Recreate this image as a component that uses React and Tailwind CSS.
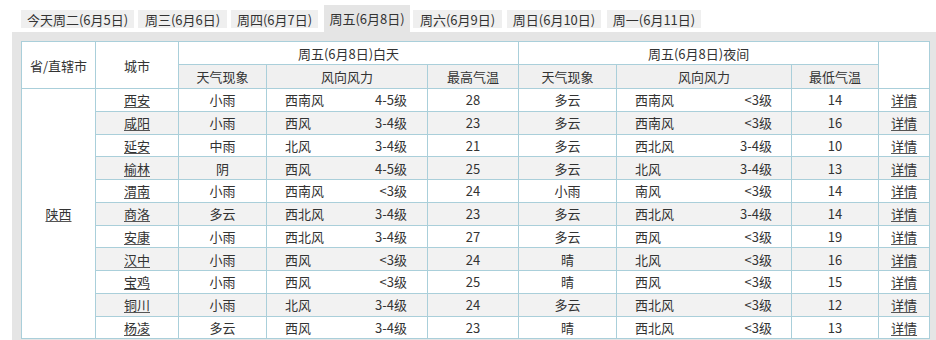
import React from "react";

// label, width and left margin of each day tab
const tabs = [
  ["今天周二(6月5日)", "w-[113px] ml-[21px]"],
  ["周三(6月6日)", "w-[89px] ml-[4px]"],
  ["周四(6月7日)", "w-[87px] ml-[4px]"],
  ["周五(6月8日)", "w-[86px] ml-[6px]"],
  ["周六(6月9日)", "w-[89px] ml-[3px]"],
  ["周日(6月10日)", "w-[94px] ml-[5px]"],
  ["周一(6月11日)", "w-[94px] ml-[6px]"],
];

const rows = [
  ["西安", "小雨", "西南风", "4-5级", "28", "多云", "西南风", "<3级", "14"],
  ["咸阳", "小雨", "西风", "3-4级", "23", "多云", "西南风", "<3级", "16"],
  ["延安", "中雨", "北风", "3-4级", "21", "多云", "西北风", "3-4级", "10"],
  ["榆林", "阴", "西风", "4-5级", "25", "多云", "北风", "3-4级", "13"],
  ["渭南", "小雨", "西南风", "<3级", "24", "小雨", "南风", "<3级", "14"],
  ["商洛", "多云", "西北风", "3-4级", "23", "多云", "西北风", "3-4级", "14"],
  ["安康", "小雨", "西北风", "3-4级", "27", "多云", "西风", "<3级", "19"],
  ["汉中", "小雨", "西风", "<3级", "24", "晴", "北风", "<3级", "16"],
  ["宝鸡", "小雨", "西风", "<3级", "25", "晴", "西风", "<3级", "15"],
  ["铜川", "小雨", "北风", "3-4级", "24", "多云", "西北风", "<3级", "12"],
  ["杨凌", "多云", "西风", "3-4级", "23", "晴", "西北风", "<3级", "13"],
];

const font = { fontFamily: '"Noto Sans CJK SC", "Liberation Sans", sans-serif' };

function Wind({ dir, level, padR }) {
  return (
    <div className={`flex justify-between pl-[18px] ${padR}`}>
      <span>{dir}</span>
      <span>{level}</span>
    </div>
  );
}

export default function App() {
  const cell = "border border-[#aacfda] text-center p-0";
  const link = "underline underline-offset-[2px] decoration-[#555]";
  return (
    <div className="w-[936px] h-[340px] overflow-hidden bg-white text-[13px] text-[#333]" style={font}>
      {/* day tabs */}
      <div className="flex items-end h-[32px]">
        {tabs.map(([t, size], i) =>
          i === 3 ? (
            <div key={t} className={`${size} h-[27px] flex items-center justify-center bg-[#e5e5e5] leading-none`}>
              {t}
            </div>
          ) : (
            <div key={t} className={`${size} h-[18px] mb-[4px] flex items-center justify-center bg-[#efefef] leading-none`}>
              {t}
            </div>
          )
        )}
      </div>

      <div className="ml-[12px] bg-[#e5e5e5] pt-[9px] pl-[9px] pr-[8px] pb-[4px]">
        <table className="table-fixed border-collapse bg-white w-[908px] leading-none">
          <colgroup>
            <col className="w-[74px]" />
            <col className="w-[83px]" />
            <col className="w-[88px]" />
            <col className="w-[161px]" />
            <col className="w-[91px]" />
            <col className="w-[98px]" />
            <col className="w-[175px]" />
            <col className="w-[87px]" />
            <col className="w-[51px]" />
          </colgroup>
          <thead>
            <tr className="h-[23px]">
              <th rowSpan={2} className={`${cell} font-normal`}>省/直辖市</th>
              <th rowSpan={2} className={`${cell} font-normal`}>城市</th>
              <th colSpan={3} className={`${cell} font-normal`}>周五(6月8日)白天</th>
              <th colSpan={3} className={`${cell} font-normal`}>周五(6月8日)夜间</th>
              <th rowSpan={2} className={`${cell} font-normal`}></th>
            </tr>
            <tr className="h-[24px] bg-[#f0f0f0]">
              <th className={`${cell} font-normal`}>天气现象</th>
              <th className={`${cell} font-normal`}>风向风力</th>
              <th className={`${cell} font-normal`}>最高气温</th>
              <th className={`${cell} font-normal`}>天气现象</th>
              <th className={`${cell} font-normal`}>风向风力</th>
              <th className={`${cell} font-normal`}>最低气温</th>
            </tr>
          </thead>
          <tbody>
            {rows.map((r, i) => (
              <tr key={r[0]} className={`h-[22.75px] ${i % 2 === 1 ? "bg-[#f2f2f2]" : "bg-white"}`}>
                {i === 0 && (
                  <td rowSpan={rows.length} className={`${cell} bg-white`}>
                    <span className={link}>陕西</span>
                  </td>
                )}
                <td className={cell}><span className={link}>{r[0]}</span></td>
                <td className={cell}>{r[1]}</td>
                <td className={cell}>
                  <Wind dir={r[2]} level={r[3]} padR="pr-[20px]" />
                </td>
                <td className={cell}>{r[4]}</td>
                <td className={cell}>{r[5]}</td>
                <td className={cell}>
                  <Wind dir={r[6]} level={r[7]} padR="pr-[19px]" />
                </td>
                <td className={cell}>{r[8]}</td>
                <td className={cell}><span className={link}>详情</span></td>
              </tr>
            ))}
          </tbody>
        </table>
      </div>
    </div>
  );
}
